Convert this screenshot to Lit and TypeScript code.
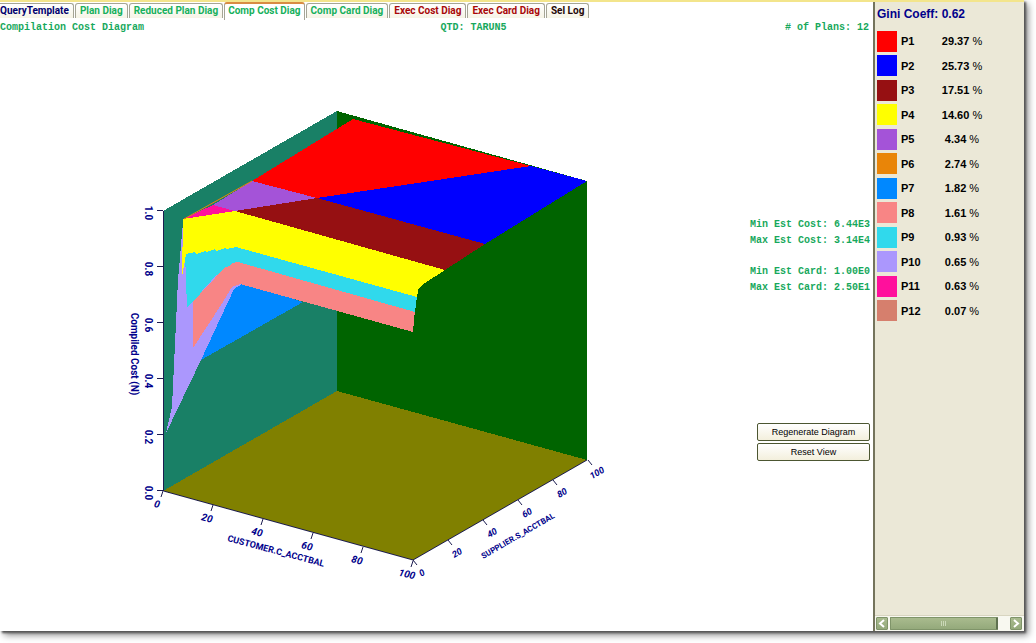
import { LitElement, html, svg, css } from "lit";
import { customElement, property, state } from "lit/decorators.js";
import { classMap } from "lit/directives/class-map.js";
import { styleMap } from "lit/directives/style-map.js";

type Plan = { name: string; color: string; share: string };

const PLANS: Plan[] = [
  { name: "P1", color: "#ff0000", share: "29.37" },
  { name: "P2", color: "#0000ff", share: "25.73" },
  { name: "P3", color: "#961012", share: "17.51" },
  { name: "P4", color: "#ffff00", share: "14.60" },
  { name: "P5", color: "#a453d8", share: "4.34" },
  { name: "P6", color: "#e98508", share: "2.74" },
  { name: "P7", color: "#0088ff", share: "1.82" },
  { name: "P8", color: "#f88585", share: "1.61" },
  { name: "P9", color: "#30d9ec", share: "0.93" },
  { name: "P10", color: "#ab97fd", share: "0.65" },
  { name: "P11", color: "#ff109c", share: "0.63" },
  { name: "P12", color: "#d67f6d", share: "0.07" },
];

const TABS = [
  { label: "QueryTemplate", tone: "navy" },
  { label: "Plan Diag", tone: "green" },
  { label: "Reduced Plan Diag", tone: "green" },
  { label: "Comp Cost Diag", tone: "green" },
  { label: "Comp Card Diag", tone: "green" },
  { label: "Exec Cost Diag", tone: "red" },
  { label: "Exec Card Diag", tone: "red" },
  { label: "Sel Log", tone: "dark" },
];

/** Three-dimensional cost surface with its walls, floor and axes. */
@customElement("cost-plot")
export class CostPlot extends LitElement {
  static styles = css`
    :host { display: block; min-width: 0; min-height: 0; }
    .plot { display: block; width: 100%; height: 100%; }
    .line { stroke: #1c1c50; stroke-width: 1; fill: none; }
    .label {
      fill: #00008b;
      font: bold 10px Roboto, "Liberation Sans", sans-serif;
      text-anchor: middle;
      dominant-baseline: central;
    }
    .small { font-size: 9px; }
    .tiny { font-size: 8px; }
    .slanted { font-style: italic; }
  `;

  render() {
    const steps = [0, 1, 2, 3, 4, 5];
    return html`
      <svg class="plot" viewBox="0 36 750 595" preserveAspectRatio="xMinYMin meet" role="img" aria-label="Compilation cost surface">
        <g shape-rendering="crispEdges">
          <polygon fill="#198066" points="163,211 337,111 337,391 163,491" />
          <polygon fill="#006400" points="337,111 587,181 587,460 337,391" />
          <polygon fill="#808000" points="163,491 337,391 587,460 413,560" />
          <polygon fill="#0088ff" points="201,360 230,288 240,282 303,302" />
          <polygon fill="#ab97fd" points="183,222 178,280 172,407 166,433 201,360 234,289 242,284 225,262" />
          <polygon fill="#f88585" points="193,301 198,296 232,260 240,261 415,310 413,332 240,284 232,287 223,302 193,348" />
          <polygon fill="#30d9ec" points="185,253 235,246 417,296 415,312 238,262 232,263 229,266 224,268 220,273 214,277 211,281 206,286 202,291 198,297 193,301 187,308" />
          <polygon fill="#ffff00" points="183,219 235,211 445,270 425,283 419,288 418,291 417,297 236,247 226,249 225,248 216,251 215,249 206,252 205,251 196,254 195,252 186,254 182,277" />
          <polygon fill="#ff109c" points="183,219 213,205 235,211" />
          <polygon fill="#a453d8" points="252,181 317,198 235,211 213,205" />
          <polygon fill="#961012" points="235,211 317,198 485,244 445,270" />
          <polygon fill="#0000ff" points="317,198 531,166 587,181 485,244" />
          <polygon fill="#ff0000" points="252,181 353,119 531,166 317,198" />
        </g>
        <path stroke="#e98508" fill="none" d="M184 219L252 181" />
        <path class="line" d="M163.5 211V491L413 560L587 460" />
        ${steps.map((i) => {
          const x = 163 + i * 50;
          const y = 491 + i * 14;
          const sx = 413 + i * 35;
          const sy = 560 - i * 20;
          return svg`
            <path class="line" d="M157 ${490.5 - i * 56}h6M${x} ${y}l-2 6M${sx} ${sy}l4 5" />
            <text class="label" transform="translate(148 ${491 - i * 56 + 2}) rotate(90)">${(i / 5).toFixed(1)}</text>
            <text class="label slanted" transform="translate(${x - 6} ${y + 13}) rotate(14)">${i * 20}</text>
            <text class="label small slanted" transform="translate(${sx + 9} ${sy + 13}) rotate(-30)">${i * 20}</text>
          `;
        })}
        <text class="label" transform="translate(134 354) rotate(90)">Compiled Cost (N)</text>
        <text class="label small" transform="translate(276 551) rotate(15)">CUSTOMER.C_ACCTBAL</text>
        <text class="label tiny" transform="translate(518 536) rotate(-30)">SUPPLIER.S_ACCTBAL</text>
      </svg>
    `;
  }
}

/** Side panel that lists each plan with its share of the diagram. */
@customElement("plan-legend")
export class PlanLegend extends LitElement {
  @property() gini = "";
  @property({ attribute: false }) plans: Plan[] = [];

  static styles = css`
    :host {
      display: flex;
      flex-direction: column;
      box-sizing: border-box;
      background: #ebe8d7;
      border-left: 2px solid #74745c;
      font: bold 11px/14px "Liberation Sans", sans-serif;
      color: #000;
    }
    .gini { margin: 0; padding: 5px 0 8px 2px; font: inherit; font-size: 12px; color: #00008b; }
    .plans { align-self: flex-start; height: 294px; border-collapse: collapse; margin-left: 2px; }
    .plans th, .plans td { padding: 0; font-weight: bold; text-align: left; vertical-align: middle; }
    .key { width: 24px; }
    .swatch { display: block; width: 20px; height: 21px; }
    .plans .name { width: 32px; }
    .plans .share { width: 58px; text-align: center; }
    .unit { font-weight: normal; }
    .scroll {
      display: flex;
      gap: 2px;
      height: 15px;
      margin-top: auto;
      padding: 0 2px 0 1px;
      background: #f8f8f0;
      border-top: 1px solid #d8d5c0;
    }
    .arrow, .thumb {
      display: grid;
      place-items: center;
      box-sizing: border-box;
      height: 13px;
      margin-top: 1px;
      padding: 0;
      border: 1px solid #7f9469;
      border-radius: 1px;
      background: linear-gradient(#a9bb8e, #94a97b);
    }
    .arrow { width: 12px; }
    .thumb { width: 108px; border-right: 2px solid #5f7150; }
    .gap { flex: 1; }
    .glyph { display: block; fill: none; stroke: #fff; stroke-width: 2; }
    .grip { stroke: #cbd8b8; stroke-width: 1; }
  `;

  render() {
    return html`
      <h2 class="gini">Gini Coeff: ${this.gini}</h2>
      <table class="plans" aria-label="Plans">
        <tbody>
          ${this.plans.map(
            (p) => html`<tr>
              <td class="key"><span class="swatch" style=${styleMap({ background: p.color })}></span></td>
              <th class="name" scope="row">${p.name}</th>
              <td class="share">${p.share} <span class="unit">%</span></td>
            </tr>`
          )}
        </tbody>
      </table>
      <div class="scroll">
        <button class="arrow" aria-label="Scroll left">
          <svg class="glyph" width="8" height="9" viewBox="0 0 8 9"><path d="M6 1L2 4.5L6 8" /></svg>
        </button>
        <button class="thumb" aria-label="Scroll position">
          <svg class="glyph grip" width="8" height="5" viewBox="0 0 8 5"><path d="M1.5 0V5M3.5 0V5M5.5 0V5" /></svg>
        </button>
        <span class="gap"></span>
        <button class="arrow" aria-label="Scroll right">
          <svg class="glyph" width="8" height="9" viewBox="0 0 8 9"><path d="M2 1L6 4.5L2 8" /></svg>
        </button>
      </div>
    `;
  }
}

@customElement("app-root")
export class AppRoot extends LitElement {
  @state() private selected = 3;

  static styles = css`
    :host {
      display: block;
      box-sizing: border-box;
      height: 100vh;
      padding: 0 12px 12px 0;
      overflow: hidden;
      background: #fff;
      font-family: "Liberation Sans", sans-serif;
    }
    .window {
      display: grid;
      grid-template-columns: 1fr 151px;
      box-sizing: border-box;
      height: 100%;
      border-top: 2px solid #f3e58c;
      background: #fff;
      box-shadow: 2px 2px 2px #555, 4px 4px 7px #888;
    }
    .main { display: grid; grid-template-rows: 16px 18px 1fr; min-width: 0; min-height: 0; }
    .tabs { display: flex; align-items: end; gap: 1px; }
    .tab {
      box-sizing: border-box;
      height: 15px;
      padding: 0 4px;
      border: 1px solid #a5a596;
      border-bottom: 0;
      border-radius: 3px 3px 0 0;
      background: linear-gradient(#fff, #f6f4e6);
      font: bold 10px/14px Roboto, "Liberation Sans", sans-serif;
      white-space: nowrap;
    }
    .tab:first-child { padding-left: 0; border-left: 0; border-radius: 0 3px 0 0; }
    .selected { height: 18px; padding: 0 3px 2px; border-top: 2px solid #d88c43; background: #fff; align-self: start; }
    .navy { color: #00006e; }
    .green { color: #17b05c; }
    .red { color: #a80808; }
    .dark { color: #250808; }
    .facts, .stats { font: bold 10px/16px "Liberation Mono", monospace; color: #17a85c; }
    .facts { display: grid; grid-template-columns: 1fr 1fr; padding: 2px 4px 0 0; white-space: nowrap; }
    .facts-end { display: flex; justify-content: space-between; padding-left: 6px; }
    .body { display: grid; grid-template-columns: 1fr 123px; min-height: 0; }
    .side { display: flex; flex-direction: column; padding: 181px 3px 0 0; }
    .stats { display: grid; gap: 15px; white-space: nowrap; justify-content: end; }
    .stats p { margin: 0; }
    .actions { display: grid; gap: 2px; padding: 127px 0 0 7px; }
    .action {
      box-sizing: border-box;
      height: 18px;
      padding: 0;
      border: 1px solid #4c5631;
      border-radius: 2px;
      background: linear-gradient(#fff, #f3efdc);
      font: 9px/16px "Liberation Sans", sans-serif;
      color: #000;
    }
  `;

  render() {
    return html`
      <div class="window">
        <main class="main">
          <div class="tabs" role="tablist">
            ${TABS.map(
              (t, i) => html`<button
                role="tab"
                aria-selected=${i === this.selected ? "true" : "false"}
                class=${classMap({ tab: true, [t.tone]: true, selected: i === this.selected })}
                @click=${() => (this.selected = i)}
              >${t.label}</button>`
            )}
          </div>
          <div class="facts">
            <span>Compilation Cost Diagram</span>
            <div class="facts-end"><span>QTD: TARUN5</span><span># of Plans: 12</span></div>
          </div>
          <div class="body">
            <cost-plot></cost-plot>
            <div class="side">
              <div class="stats">
                <p>Min Est Cost: 6.44E3<br />Max Est Cost: 3.14E4</p>
                <p>Min Est Card: 1.00E0<br />Max Est Card: 2.50E1</p>
              </div>
              <div class="actions">
                <button class="action">Regenerate Diagram</button>
                <button class="action">Reset View</button>
              </div>
            </div>
          </div>
        </main>
        <plan-legend gini="0.62" .plans=${PLANS}></plan-legend>
      </div>
    `;
  }
}
